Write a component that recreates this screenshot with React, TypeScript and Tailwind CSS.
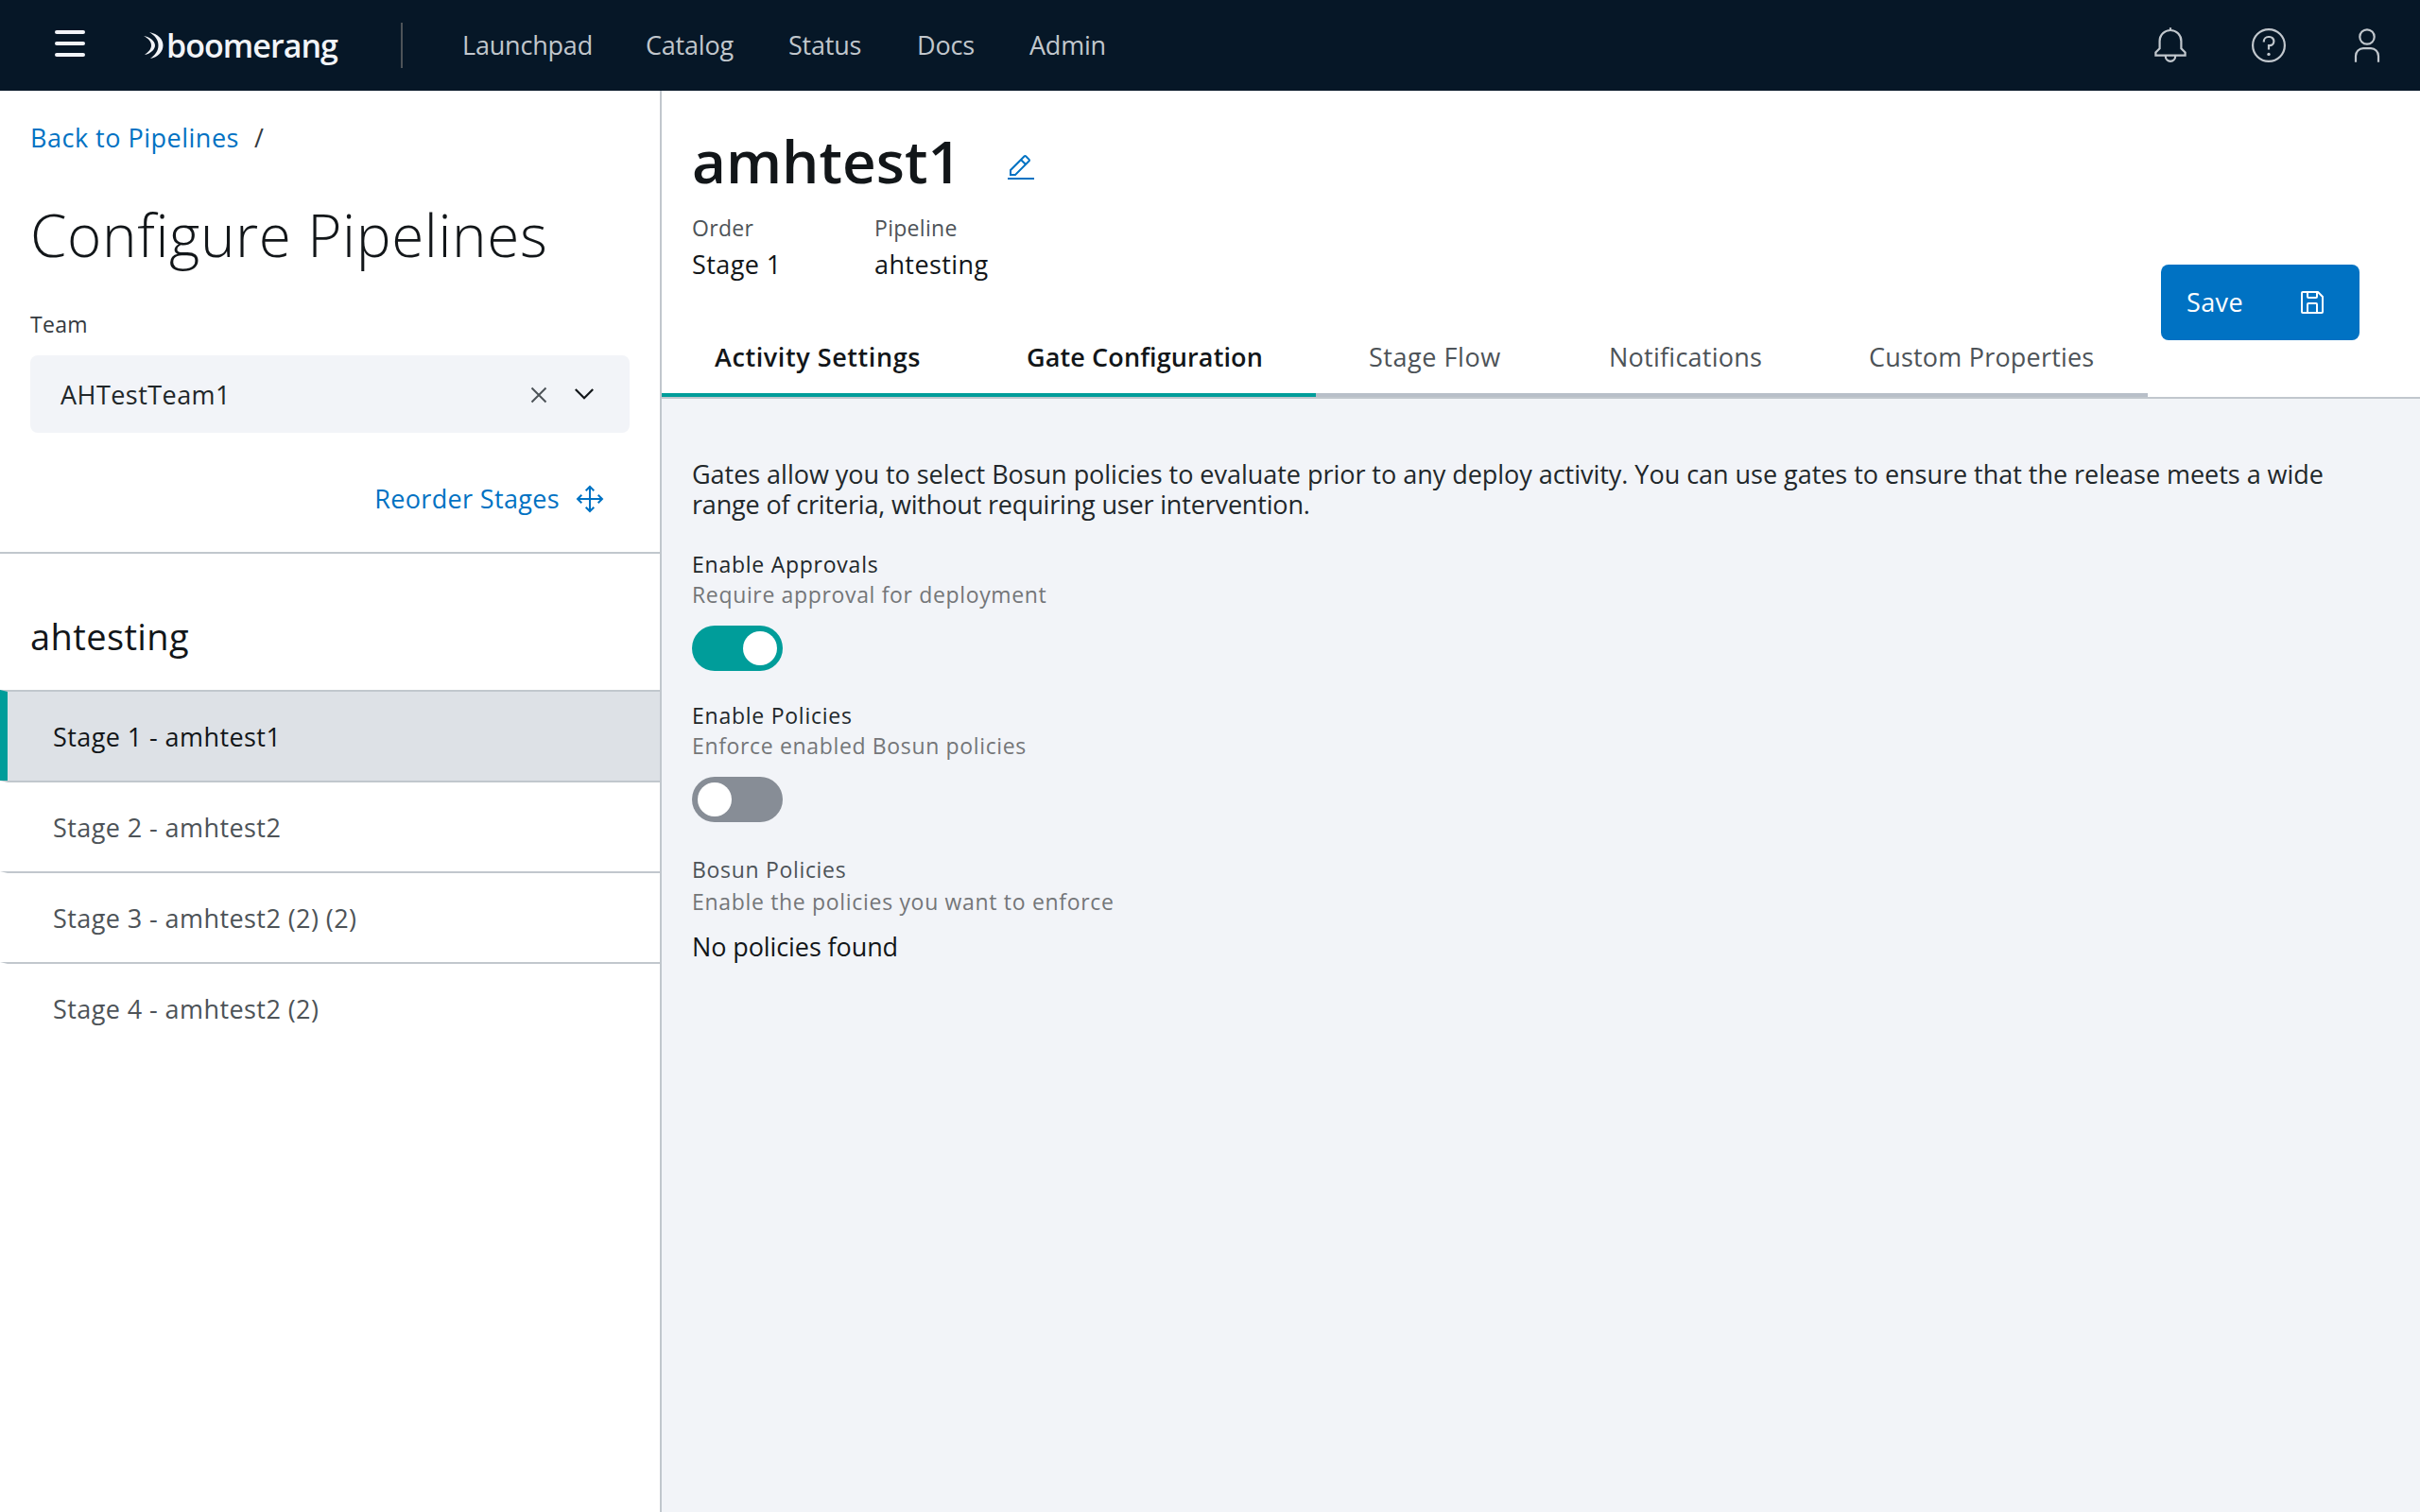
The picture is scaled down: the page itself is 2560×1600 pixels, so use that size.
import type { ReactNode } from "react";

const navLinks = [
  { label: "Launchpad", width: "w-[194px]" },
  { label: "Catalog", width: "w-[151px]" },
  { label: "Status", width: "w-[136px]" },
  { label: "Docs", width: "w-[119px]" },
  { label: "Admin", width: "w-[120px]" },
];

const stages = [
  "Stage 1 - amhtest1",
  "Stage 2 - amhtest2",
  "Stage 3 - amhtest2 (2) (2)",
  "Stage 4 - amhtest2 (2)",
];

const tabs = [
  { label: "Activity Settings", active: true, style: "w-[330px] tracking-[0.58px]" },
  { label: "Gate Configuration", active: true, style: "w-[362px] tracking-[0.12px]" },
  { label: "Stage Flow", active: false, style: "w-[254px] tracking-[0.55px]" },
  { label: "Notifications", active: false, style: "w-[275px] tracking-[0.25px]" },
  { label: "Custom Properties", active: false, style: "w-[351px] tracking-[0.2px]" },
];

function BoomerangMark() {
  return (
    <svg viewBox="0 0 26 32" className="h-8 w-[26px] shrink-0" fill="#f2f4f8">
      <path d="M8 2C17 4 22.500 9 22.500 16C22.500 23 17 28.500 9 30C14 26 17.500 22 17.500 16C17.500 10 14 6 8 2Z" />
      <path d="M2 6C8 7 14 11 14 16C14 20.500 9 25 3 26C7 23 10 20 10 16C10 11.500 7 9 2 6Z" />
    </svg>
  );
}

function HeaderIcon({ children }: { children: ReactNode }) {
  return (
    <svg viewBox="0 0 20 20" className="size-10" fill="none" stroke="#c1c7cd" strokeWidth="1.1">
      {children}
    </svg>
  );
}

function Header() {
  return (
    <header className="flex h-24 items-center bg-[#061727] pl-[58px] pr-9">
      <div className="mb-1 flex h-7 w-8 flex-col justify-between">
        <span className="h-1 rounded-sm bg-[#f2f4f8]" />
        <span className="h-1 rounded-sm bg-[#f2f4f8]" />
        <span className="h-1 rounded-sm bg-[#f2f4f8]" />
      </div>
      <div className="ml-[60px] flex w-[274px] items-center">
        <BoomerangMark />
        <span className="text-[34px] font-[650] leading-none tracking-[-0.95px] text-[#f2f4f8]">boomerang</span>
      </div>
      <div className="h-12 w-0.5 bg-[#4d5358]" />
      <nav className="ml-[63px] mt-px flex text-[27px] tracking-[-0.2px] text-[#c1c7cd]">
        {navLinks.map((link) => (
          <a key={link.label} className={link.width}>
            {link.label}
          </a>
        ))}
      </nav>
      <div className="ml-auto flex gap-16">
        <HeaderIcon>
          <path d="M10 .6V2M10 2a5.700 5.700 0 0 0-5.700 5.700v4L2.200 13.700V15.300H17.800V13.700L15.700 11.700v-4A5.700 5.700 0 0 0 10 2zM7.400 15.300v.5a2.600 2.600 0 0 0 5.200 0v-.5" />
        </HeaderIcon>
        <HeaderIcon>
          <circle cx="10" cy="10" r="8.450" />
          <path d="M7.400 8.200v-.3A2.400 2.400 0 0 1 9.800 5.500h.6a2.300 2.300 0 0 1 0 4.600H10v2.200" />
          <circle cx="10" cy="14.700" r=".85" fill="#c1c7cd" stroke="none" />
        </HeaderIcon>
        <HeaderIcon>
          <circle cx="10" cy="5.500" r="3.850" />
          <path d="M4 18.900V15.600a4 4 0 0 1 4-4h4a4 4 0 0 1 4 4v3.300" />
        </HeaderIcon>
      </div>
    </header>
  );
}

function Sidebar() {
  return (
    <aside className="w-[700px] shrink-0 border-r-2 border-[#c1c7cd] bg-white">
      <div className="h-[490px] border-b-2 border-[#c1c7cd] pl-8 pr-8 pt-[34px]">
        <div className="flex text-[27px] leading-8 tracking-[0.5px]">
          <a className="text-[#0072c3]">Back to Pipelines</a>
          <span className="ml-4 text-[#343a3f]">/</span>
        </div>
        <h1 className="mt-[46px] text-[62px] font-light leading-[80px] tracking-[0.6px] text-[#121619]">
          Configure Pipelines
        </h1>
        <label className="mt-[39px] block text-[23px] leading-8 tracking-[0.3px] text-[#343a3f]">Team</label>
        <div className="mt-[17px] flex h-[82px] items-center rounded-lg bg-[#f2f4f8] pl-8 pr-8 text-[27px] tracking-[0.45px] text-[#21272a]">
          <span className="flex-1 pt-0.5">AHTestTeam1</span>
          <svg viewBox="0 0 32 32" className="size-8" fill="none" stroke="#4d5358" strokeWidth="2">
            <path d="M8.500 9.500l15 15M23.500 9.500l-15 15" />
          </svg>
          <svg viewBox="0 0 32 32" className="ml-4 size-8" fill="none" stroke="#121619" strokeWidth="2.200">
            <path d="M6.800 11L16 20.200 25.200 11" />
          </svg>
        </div>
        <a className="mt-[54px] flex items-center justify-end pr-[26px] text-[27px] leading-8 tracking-[0.35px] text-[#0072c3]">
          Reorder Stages
          <svg viewBox="0 0 32 32" className="ml-4 size-8" fill="none" stroke="#0072c3" strokeWidth="2">
            <path d="M16 3v26M3 16h26M11.700 7.300L16 3l4.300 4.300M11.700 24.700L16 29l4.300-4.300M7.300 11.700L3 16l4.300 4.300M24.700 11.700L29 16l-4.300 4.300" />
          </svg>
        </a>
      </div>
      <h2 className="pb-[33px] pl-8 pt-16 text-[38px] leading-[47px] tracking-[0.4px] text-[#121619]">ahtesting</h2>
      <ul>
        {stages.map((stage, index) => (
          <li
            key={stage}
            className={
              "flex h-24 items-center border-l-8 border-t-2 border-t-[#c1c7cd] pl-12 pt-0.5 text-[27px] tracking-[0.42px] " +
              (index === 0
                ? "border-l-[#009d9a] bg-[#dde1e6] text-[#121619]"
                : "border-l-transparent text-[#4d5358]")
            }
          >
            {stage}
          </li>
        ))}
      </ul>
    </aside>
  );
}

function Fact({ label, value }: { label: string; value: string }) {
  return (
    <div className="w-[193px]">
      <dt className="text-[23px] leading-[38px] tracking-[0.3px] text-[#4d5358]">{label}</dt>
      <dd className="text-[27px] leading-[39px] tracking-[0.4px] text-[#121619]">{value}</dd>
    </div>
  );
}

function StageHeader() {
  return (
    <section className="flex h-[326px] border-b-2 border-[#c1c7cd] bg-white">
      <div className="flex flex-col">
        <div className="flex items-center pl-8 pt-[34px]">
          <h2 className="w-[332px] text-[62px] font-[650] leading-[80px] text-[#121619]">amhtest1</h2>
          <svg viewBox="0 0 32 32" className="mt-4 size-8" fill="#0072c3">
            <path d="M2 26H30V28H2zM25.400 9c.8-.8.8-2 0-2.800l-3.600-3.600c-.8-.8-2-.8-2.800 0l-15 15V24h6.400L25.400 9zM20.400 4L24 7.600l-3 3L17.400 7 20.400 4zM6 22v-3.600l10-10 3.600 3.600-10 10H6z" />
          </svg>
        </div>
        <dl className="mt-3 flex pl-8">
          <Fact label="Order" value="Stage 1" />
          <Fact label="Pipeline" value="ahtesting" />
        </dl>
        <div className="mt-auto flex text-[27px]">
          {tabs.map((tab) => (
            <div
              key={tab.label}
              className={
                "flex h-[84px] items-center whitespace-nowrap border-b-4 pl-14 pt-1 " +
                tab.style +
                (tab.active
                  ? " border-[#009d9a] font-semibold text-[#121619]"
                  : " border-[#b8bfc8] text-[#4d5358]")
              }
            >
              {tab.label}
            </div>
          ))}
        </div>
      </div>
      <button className="ml-[14px] mt-[184px] flex h-20 w-[210px] items-center justify-between rounded-lg bg-[#0072c3] pl-[27px] pr-[34px] text-[27px] tracking-[0.4px] text-white">
        Save
        <svg viewBox="0 0 32 32" className="size-8" fill="#ffffff">
          <path d="M27.710 9.290l-5-5A1 1 0 0 0 22 4H6A2 2 0 0 0 4 6V26a2 2 0 0 0 2 2H26a2 2 0 0 0 2-2V10A1 1 0 0 0 27.710 9.290ZM12 6h8v4H12Zm8 20H12V18h8Zm2 0V18a2 2 0 0 0-2-2H12a2 2 0 0 0-2 2v8H6V6h4v4a2 2 0 0 0 2 2h8a2 2 0 0 0 2-2V6.410l4 4V26Z" />
        </svg>
      </button>
    </section>
  );
}

function Toggle({ label, hint, on }: { label: string; hint: string; on: boolean }) {
  return (
    <div className="mb-[31px] text-[23px] leading-8">
      <div className="tracking-[0.75px] text-[#21272a]">{label}</div>
      <div className="tracking-[0.65px] text-[#747678]">{hint}</div>
      <div
        className={
          "mt-[17px] flex h-12 w-24 items-center rounded-full px-1.5 " +
          (on ? "justify-end bg-[#009d9a]" : "justify-start bg-[#878d96]")
        }
      >
        <span className="size-9 rounded-full bg-white" />
      </div>
    </div>
  );
}

function GateConfiguration() {
  return (
    <section className="px-8 pt-16">
      <p className="mb-[31px] text-[27px] leading-8 tracking-[-0.03px] text-[#21272a]">
        Gates allow you to select Bosun policies to evaluate prior to any deploy activity. You can use gates to ensure that
        the release meets a wide
        <br />
        <span className="tracking-[-0.17px]">range of criteria, without requiring user intervention.</span>
      </p>
      <Toggle label="Enable Approvals" hint="Require approval for deployment" on />
      <Toggle label="Enable Policies" hint="Enforce enabled Bosun policies" on={false} />
      <div className="pt-0.5 text-[23px] leading-[34px] tracking-[0.68px]">
        <div className="text-[#4d5358]">Bosun Policies</div>
        <div className="text-[#747678]">Enable the policies you want to enforce</div>
      </div>
      <p className="mt-[15px] text-[27px] leading-8 tracking-[-0.1px] text-[#121619]">No policies found</p>
    </section>
  );
}

export default function App() {
  return (
    <div className="flex h-[1600px] w-[2560px] flex-col overflow-hidden bg-[#f2f4f8] font-['Open_Sans',sans-serif]">
      <Header />
      <div className="flex flex-1">
        <Sidebar />
        <main className="flex-1">
          <StageHeader />
          <GateConfiguration />
        </main>
      </div>
    </div>
  );
}
